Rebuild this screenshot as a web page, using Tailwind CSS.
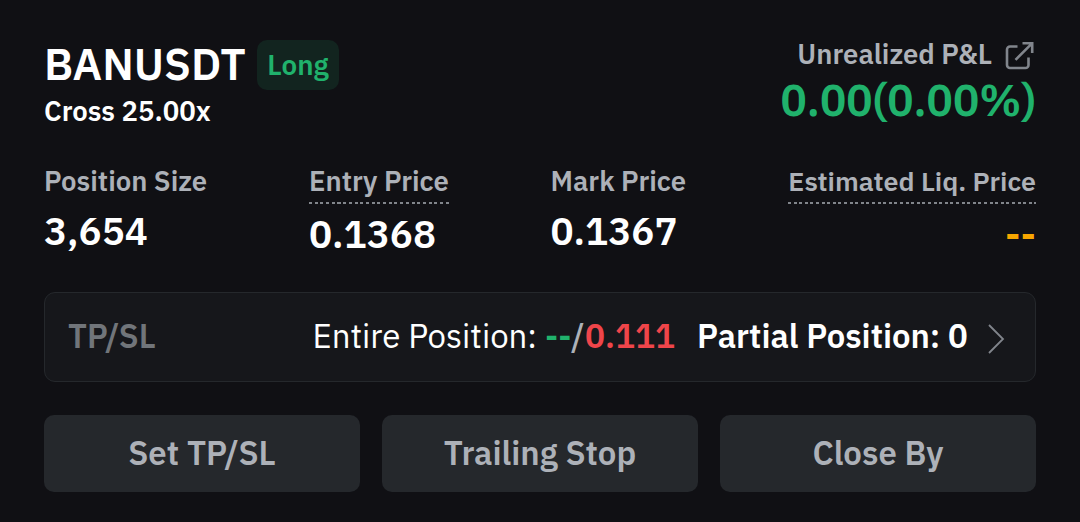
<!DOCTYPE html>
<html lang="en">
<head>
    <meta charset="UTF-8">
    <meta name="viewport" content="width=device-width, initial-scale=1.0">
    <title>BANUSDT Position</title>
    <script src="https://cdn.jsdelivr.net/npm/@tailwindcss/browser@4"></script>
</head>
<body class="bg-[#101014] font-['IBM_Plex_Sans','Noto_Sans_CJK_SC',sans-serif] font-semibold text-white">
    <div class="w-[1080px] h-[522px] px-11 pt-[37px] overflow-hidden">
        <!-- Header -->
        <div class="flex justify-between h-[128px]">
            <div>
                <div class="flex items-center h-[55px]">
                    <h1 class="w-[213px] pb-[2px] text-[44px] leading-[52px] whitespace-nowrap">BANUSDT</h1>
                    <span class="flex items-center justify-center w-[82px] h-[50px] rounded-[10px] bg-[#12241f] text-[27.8px] leading-[36px] text-[#20b26c]">Long</span>
                </div>
                <p class="mt-px text-[27.5px] leading-[36px]">Cross 25.00x</p>
            </div>
            <div class="flex flex-col items-end">
                <div class="flex items-center gap-3 h-[34px]">
                    <span class="text-[27.5px] leading-[34px] text-[#adb1b8]">Unrealized P&amp;L</span>
                    <svg class="w-8 h-8 mt-[3px] text-[#81858c]" fill="none" stroke="currentColor" stroke-width="2.6" viewBox="0 0 32 32">
                        <path d="M13.500 6.500H6a3 3 0 0 0-3 3V25a3 3 0 0 0 3 3h15.500a3 3 0 0 0 3-3V17.500M18.500 3.200H28.200V13M28 3.400L11.500 19.900"></path>
                    </svg>
                </div>
                <p class="text-[43.8px] leading-[58px] text-[#20b26c]">0.00(0.00%)</p>
            </div>
        </div>

        <!-- Position stats -->
        <div class="flex h-[127px]">
            <div class="w-[265px]">
                <p class="text-[27.5px] leading-[32px] text-[#adb1b8]">Position Size</p>
                <p class="mt-[9px] text-[38.5px] leading-[50px]">3,654</p>
            </div>
            <div class="w-[241.500px]">
                <p class="text-[27.5px] leading-[32px] text-[#adb1b8]">Entry Price</p>
                <div class="w-[140px] h-[2px] mt-[5px] bg-[repeating-linear-gradient(90deg,#81858b_0_3px,transparent_3px_5.7px)]"></div>
                <p class="mt-[5px] text-[38.5px] leading-[50px]">0.1368</p>
            </div>
            <div>
                <p class="text-[27.5px] leading-[32px] text-[#adb1b8]">Mark Price</p>
                <p class="mt-[9px] text-[38.5px] leading-[50px]">0.1367</p>
            </div>
            <div class="flex flex-col items-end ml-auto">
                <p class="text-[26.8px] leading-[32px] text-[#adb1b8]">Estimated Liq. Price</p>
                <div class="w-[248px] h-[2px] mt-[5px] bg-[repeating-linear-gradient(90deg,#81858b_0_3px,transparent_3px_5.6px)]"></div>
                <p class="mt-[5px] text-[38.5px] leading-[50px] text-[#f7a600]">--</p>
            </div>
        </div>

        <!-- TP/SL -->
        <div class="flex items-center h-[90px] pl-[23px] pr-[30px] pb-[2px] rounded-[11px] border border-[#25282c] bg-[#16171b] text-[32.9px] leading-[44px] whitespace-nowrap">
            <span class="w-[244.500px] text-[32.6px] text-[#71757a]">TP/SL</span>
            <span class="w-[232.500px] text-[33px] font-normal">Entire Position:</span>
            <span class="w-[26px] text-[#20b26c]">--</span>
            <span class="w-[14px] font-medium text-[#adb1b8]">/</span>
            <span class="w-[112px] text-[33.3px] text-[#ef454a]">0.111</span>
            <span>Partial Position: 0</span>
            <svg class="w-[18px] h-8 mt-[5px] ml-auto shrink-0 text-[#81858c]" fill="none" stroke="currentColor" stroke-width="1.8" viewBox="0 0 18 32">
                <path d="M2 2L16 16L2 30"></path>
            </svg>
        </div>

        <!-- Actions -->
        <div class="grid grid-cols-3 gap-[22px] mt-[33px] text-[33px] leading-[44px] text-[#adb1b8]">
            <button class="h-[77px] pb-[2px] rounded-[10px] bg-[#25282c]">Set TP/SL</button>
            <button class="h-[77px] pb-[2px] rounded-[10px] bg-[#25282c]">Trailing Stop</button>
            <button class="h-[77px] pb-[2px] rounded-[10px] bg-[#25282c]">Close By</button>
        </div>
    </div>
</body>
</html>
